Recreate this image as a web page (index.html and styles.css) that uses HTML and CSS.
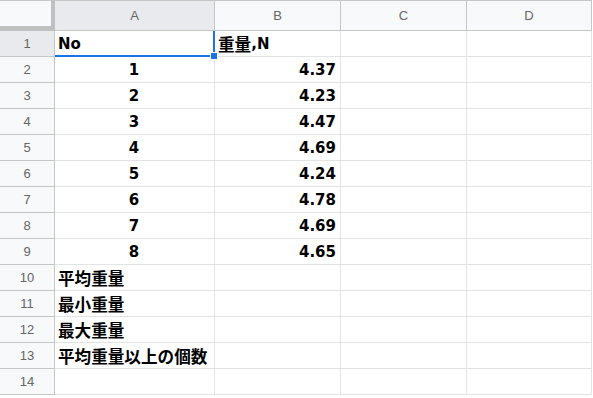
FILE: index.html
```html
<!DOCTYPE html>
<html lang="ja">
<head>
    <meta charset="UTF-8">
    <title>重量</title>
    <link rel="stylesheet" href="styles.css">
</head>
<body>
    <div class="sheet">
        <!-- column headers -->
        <div class="corner"></div>
        <div class="col-head active">A</div>
        <div class="col-head">B</div>
        <div class="col-head">C</div>
        <div class="col-head">D</div>

        <div class="row-head active">1</div>
        <div class="cell selected">No<span class="handle"></span></div>
        <div class="cell"><span class="jp">重量</span>,N</div>
        <div class="cell"></div>
        <div class="cell"></div>

        <div class="row-head">2</div>
        <div class="cell center">1</div>
        <div class="cell right">4.37</div>
        <div class="cell"></div>
        <div class="cell"></div>

        <div class="row-head">3</div>
        <div class="cell center">2</div>
        <div class="cell right">4.23</div>
        <div class="cell"></div>
        <div class="cell"></div>

        <div class="row-head">4</div>
        <div class="cell center">3</div>
        <div class="cell right">4.47</div>
        <div class="cell"></div>
        <div class="cell"></div>

        <div class="row-head">5</div>
        <div class="cell center">4</div>
        <div class="cell right">4.69</div>
        <div class="cell"></div>
        <div class="cell"></div>

        <div class="row-head">6</div>
        <div class="cell center">5</div>
        <div class="cell right">4.24</div>
        <div class="cell"></div>
        <div class="cell"></div>

        <div class="row-head">7</div>
        <div class="cell center">6</div>
        <div class="cell right">4.78</div>
        <div class="cell"></div>
        <div class="cell"></div>

        <div class="row-head">8</div>
        <div class="cell center">7</div>
        <div class="cell right">4.69</div>
        <div class="cell"></div>
        <div class="cell"></div>

        <div class="row-head">9</div>
        <div class="cell center">8</div>
        <div class="cell right">4.65</div>
        <div class="cell"></div>
        <div class="cell"></div>

        <div class="row-head">10</div>
        <div class="cell"><span class="jp">平均重量</span></div>
        <div class="cell"></div>
        <div class="cell"></div>
        <div class="cell"></div>

        <div class="row-head">11</div>
        <div class="cell"><span class="jp">最小重量</span></div>
        <div class="cell"></div>
        <div class="cell"></div>
        <div class="cell"></div>

        <div class="row-head">12</div>
        <div class="cell"><span class="jp">最大重量</span></div>
        <div class="cell"></div>
        <div class="cell"></div>
        <div class="cell"></div>

        <div class="row-head">13</div>
        <div class="cell"><span class="jp">平均重量以上の個数</span></div>
        <div class="cell"></div>
        <div class="cell"></div>
        <div class="cell"></div>

        <div class="row-head">14</div>
        <div class="cell"></div>
        <div class="cell"></div>
        <div class="cell"></div>
        <div class="cell"></div>
    </div>
</body>
</html>
```

FILE: styles.css
```css
body {
    margin: 0;
    background: white;
    font-family: "Liberation Sans", Arial, sans-serif;
    overflow: hidden;
}

.sheet {
    display: grid;
    grid-template-columns: 55px 160px 126px 126px 125px;
    grid-template-rows: 31px;
    grid-auto-rows: 26px;
}

.sheet > div {
    box-sizing: border-box;
}

.corner {
    background: #f8f9fa;
    border-top: 1px solid #c4c7c5;
    border-right: 4px solid #c0c0c0;
    border-bottom: 5px solid #c0c0c0;
}

.col-head {
    background: #f8f9fa;
    border-top: 1px solid #c4c7c5;
    border-right: 1px solid #c4c7c5;
    border-bottom: 1px solid #c4c7c5;
    color: #666;
    font-size: 13px;
    display: flex;
    align-items: center;
    justify-content: center;
}

.row-head {
    background: #f8f9fa;
    border-right: 1px solid #c4c7c5;
    border-bottom: 1px solid #c4c7c5;
    color: #666;
    font-size: 13px;
    display: flex;
    align-items: center;
    justify-content: center;
}

.col-head.active, .row-head.active {
    background: #e8eaed;
}

.cell {
    border-right: 1px solid #e2e3e3;
    border-bottom: 1px solid #e2e3e3;
    font-family: "DejaVu Sans", "Noto Sans CJK JP", sans-serif;
    font-size: 15px;
    font-weight: bold;
    color: #000;
    padding: 1px 4px 0 3px;
    display: flex;
    align-items: center;
    white-space: nowrap;
}

.jp {
    font-family: "Noto Sans CJK JP", sans-serif;
    font-size: 16.6px;
}

.center {
    justify-content: center;
}

.right {
    justify-content: flex-end;
}

.selected {
    position: relative;
}

.selected::after {
    content: "";
    position: absolute;
    left: 0;
    top: 0;
    right: -1px;
    bottom: -1px;
    border-right: 2px solid #1a73e8;
    border-bottom: 2px solid #1a73e8;
}

.handle {
    position: absolute;
    right: -4px;
    bottom: -4px;
    width: 6px;
    height: 6px;
    background: #1a73e8;
    border: 1px solid white;
    z-index: 1;
}
```
